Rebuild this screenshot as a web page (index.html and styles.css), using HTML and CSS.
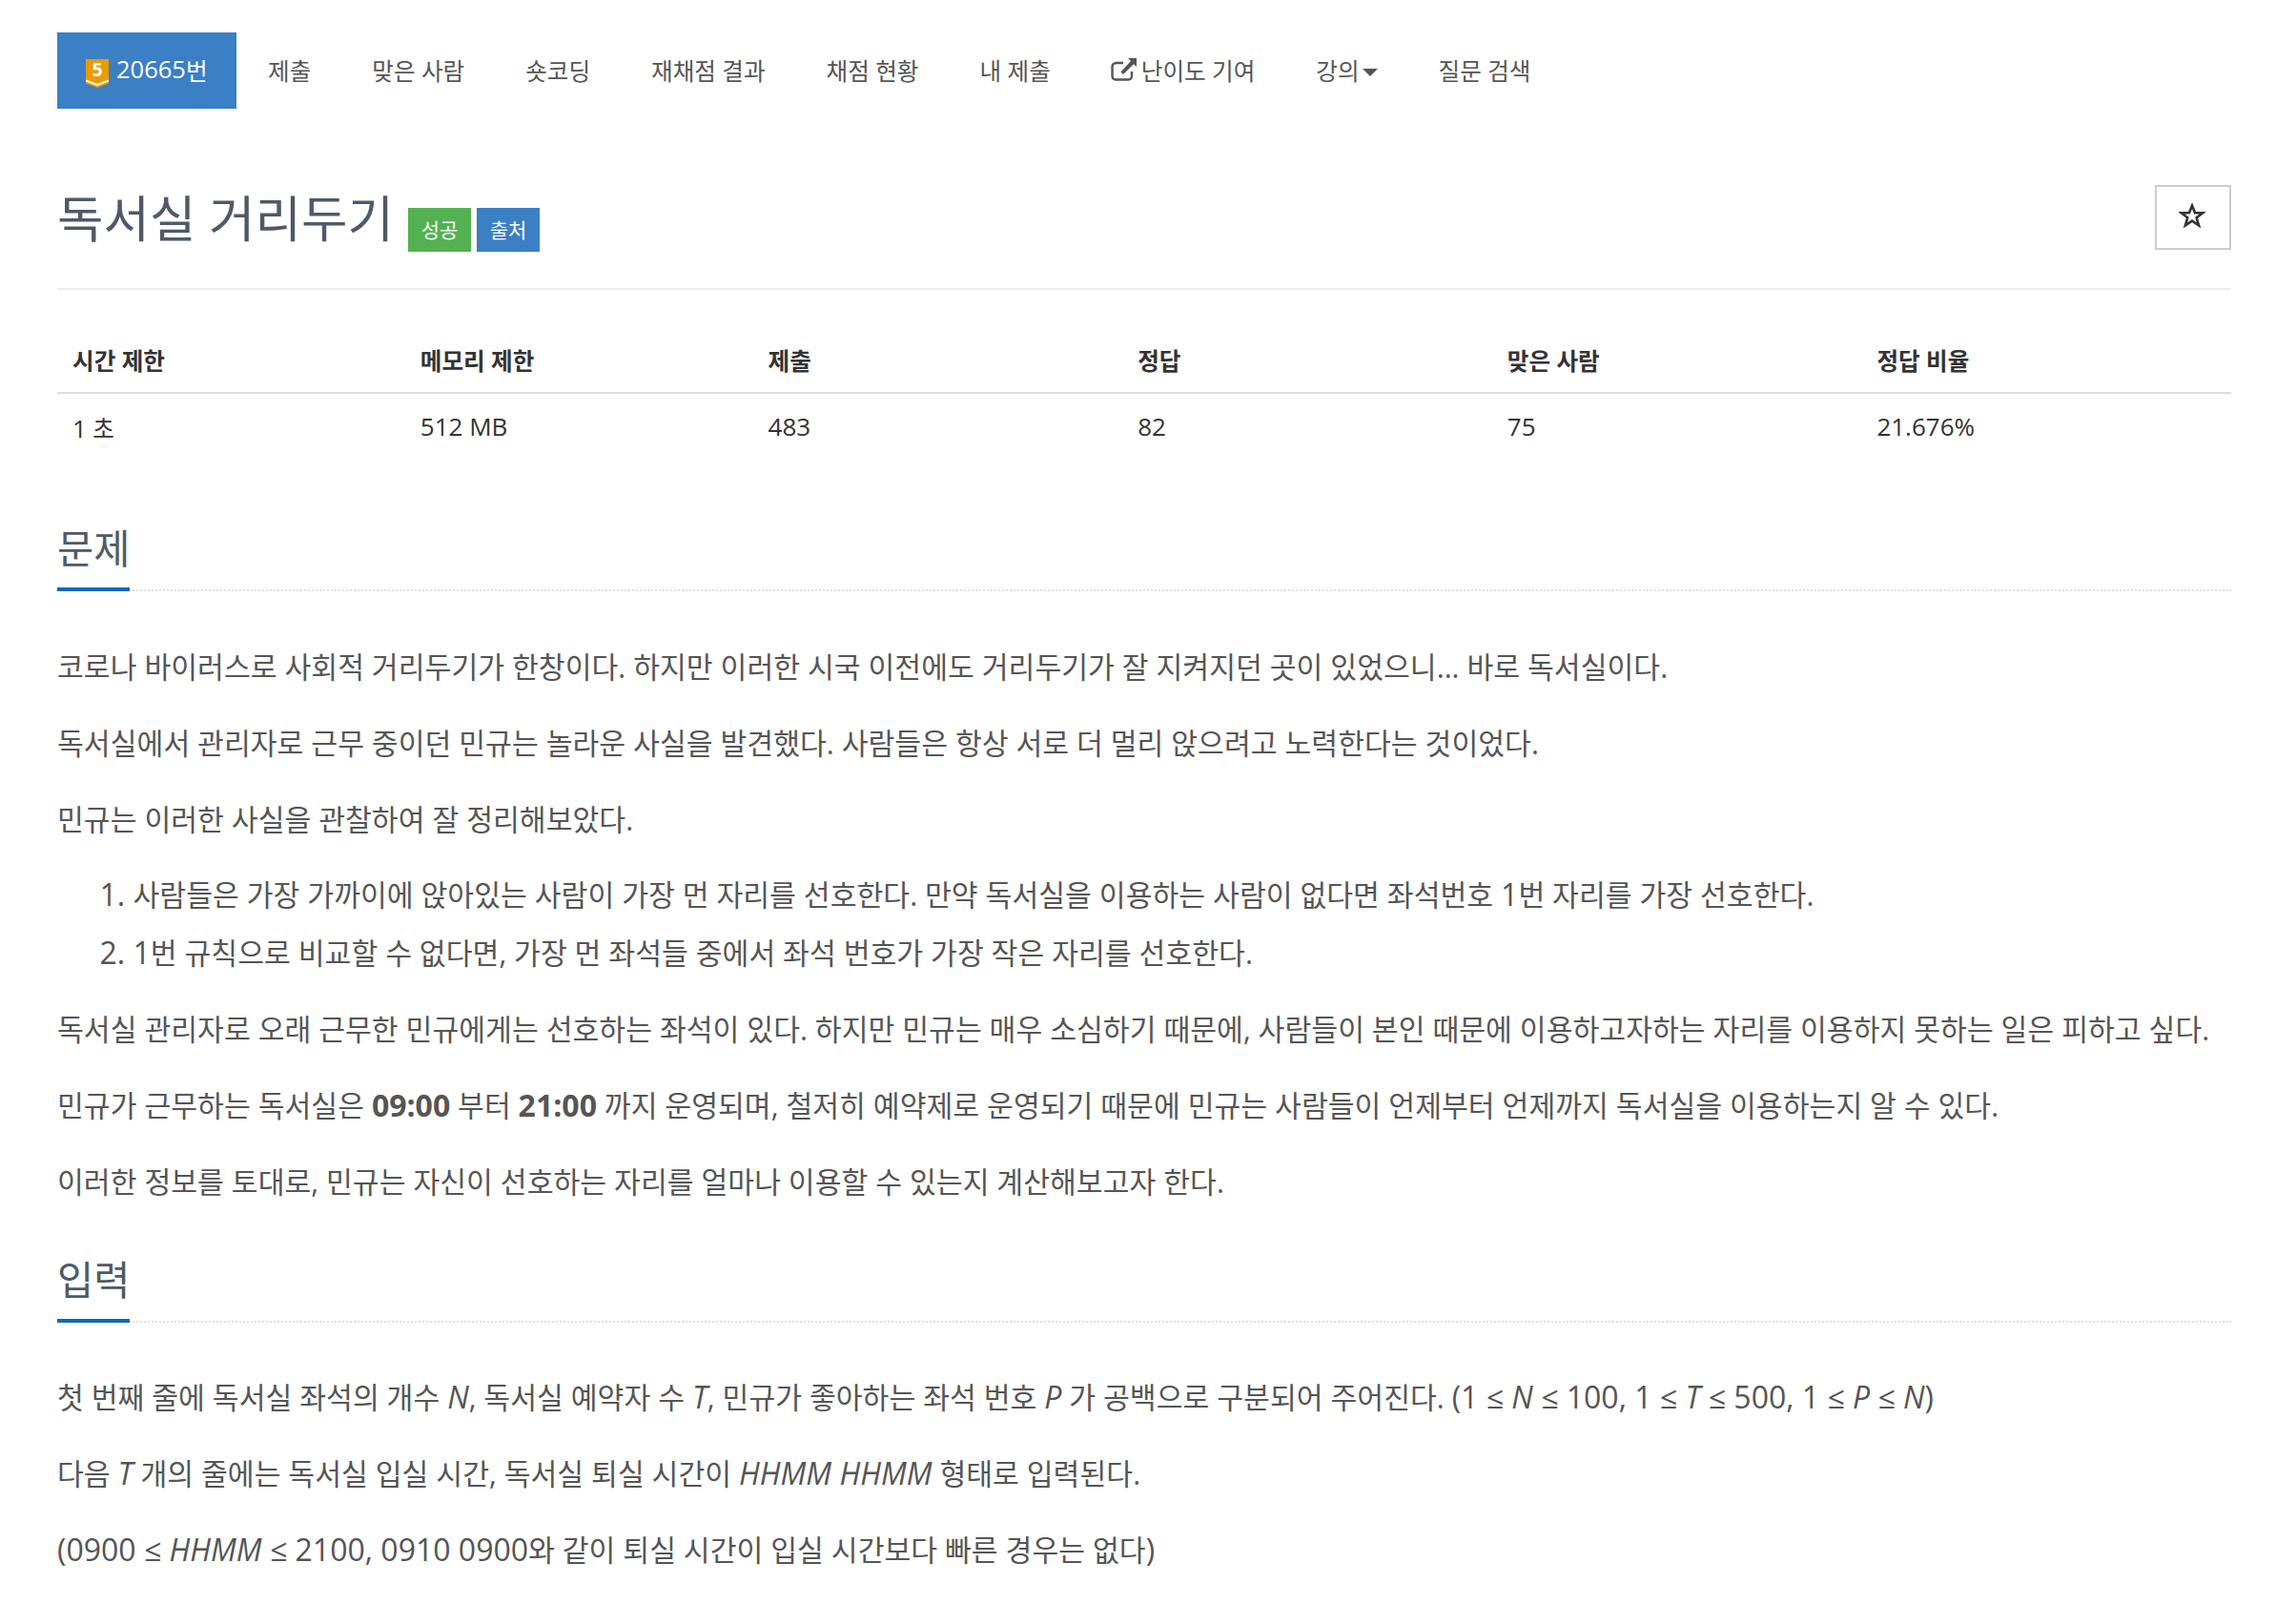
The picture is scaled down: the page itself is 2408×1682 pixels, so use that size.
FILE: index.html
```html
<!DOCTYPE html>
<html lang="ko">
<head>
<meta charset="utf-8">
<title>독서실 거리두기</title>
<link rel="stylesheet" href="styles.css">
</head>
<body>
<div class="page">
  <nav class="tabs">
    <a class="tab active"><svg class="tier" viewBox="0 0 24 30" width="24" height="30"><path d="M0 0H24V25.5L12 30L0 25.5Z" fill="#ec9a00"/><path d="M0 22.5L12 27L24 22.5" fill="none" stroke="#fff" stroke-width="2"/><text x="12" y="18" class="tier-num">5</text></svg><span class="en">20665</span>번</a>
    <a class="tab">제출</a>
    <a class="tab">맞은 사람</a>
    <a class="tab">숏코딩</a>
    <a class="tab">재채점 결과</a>
    <a class="tab">채점 현황</a>
    <a class="tab">내 제출</a>
    <a class="tab"><svg class="ext" viewBox="0 0 28 24" width="28" height="24"><path d="M13 5H5.5A4 4 0 0 0 1.5 9V19A3.5 3.5 0 0 0 5 22.5H18.5A3.5 3.5 0 0 0 22 19V14" fill="none" stroke="#555" stroke-width="2.4"/><path d="M18 0H27V9L24 6.2L13 17L10.4 14.5L21 3Z" fill="#555"/></svg>난이도 기여</a>
    <a class="tab">강의<span class="caret"></span></a>
    <a class="tab">질문 검색</a>
  </nav>

  <header class="title-row">
    <h1 class="title">독서실 거리두기<span class="label green">성공</span><span class="label blue">출처</span></h1>
    <button class="star-btn"><svg viewBox="0 0 28 26" width="28" height="26"><path d="M14 2.5L17 10.2L25.4 10.2L18.7 15.3L21.1 23.4L14 18.6L6.9 23.4L9.3 15.3L2.6 10.2L11 10.2Z" fill="none" stroke="#333" stroke-width="2.6"/></svg></button>
  </header>

  <table class="info">
    <thead>
      <tr><th class="c1">시간 제한</th><th class="c1">메모리 제한</th><th class="c2">제출</th><th class="c2">정답</th><th class="c2">맞은 사람</th><th class="c2">정답 비율</th></tr>
    </thead>
    <tbody>
      <tr><td><span class="en">1</span> 초</td><td><span class="en">512 MB</span></td><td><span class="en">483</span></td><td><span class="en">82</span></td><td><span class="en">75</span></td><td><span class="en">21.676%</span></td></tr>
    </tbody>
  </table>

  <section class="sec">
    <h2 class="head"><span>문제</span></h2>
    <div class="body">
      <p>코로나 바이러스로 사회적 거리두기가 한창이다. 하지만 이러한 시국 이전에도 거리두기가 잘 지켜지던 곳이 있었으니... 바로 독서실이다.</p>
      <p>독서실에서 관리자로 근무 중이던 민규는 놀라운 사실을 발견했다. 사람들은 항상 서로 더 멀리 앉으려고 노력한다는 것이었다.</p>
      <p>민규는 이러한 사실을 관찰하여 잘 정리해보았다.</p>
      <ol>
        <li>사람들은 가장 가까이에 앉아있는 사람이 가장 먼 자리를 선호한다. 만약 독서실을 이용하는 사람이 없다면 좌석번호 <span class="en">1</span>번 자리를 가장 선호한다.</li>
        <li><span class="en">1</span>번 규칙으로 비교할 수 없다면, 가장 먼 좌석들 중에서 좌석 번호가 가장 작은 자리를 선호한다.</li>
      </ol>
      <p>독서실 관리자로 오래 근무한 민규에게는 선호하는 좌석이 있다. 하지만 민규는 매우 소심하기 때문에, 사람들이 본인 때문에 이용하고자하는 자리를 이용하지 못하는 일은 피하고 싶다.</p>
      <p>민규가 근무하는 독서실은 <b class="en">09:00</b> 부터 <b class="en">21:00</b> 까지 운영되며, 철저히 예약제로 운영되기 때문에 민규는 사람들이 언제부터 언제까지 독서실을 이용하는지 알 수 있다.</p>
      <p>이러한 정보를 토대로, 민규는 자신이 선호하는 자리를 얼마나 이용할 수 있는지 계산해보고자 한다.</p>
    </div>
  </section>

  <section class="sec">
    <h2 class="head"><span>입력</span></h2>
    <div class="body">
      <p>첫 번째 줄에 독서실 좌석의 개수 <i class="en">N</i>, 독서실 예약자 수 <i class="en">T</i>, 민규가 좋아하는 좌석 번호 <i class="en">P</i> 가 공백으로 구분되어 주어진다. <span class="en">(1 ≤ <i>N</i> ≤ 100, 1 ≤ <i>T</i> ≤ 500, 1 ≤ <i>P</i> ≤ <i>N</i>)</span></p>
      <p>다음 <i class="en">T</i> 개의 줄에는 독서실 입실 시간, 독서실 퇴실 시간이 <i class="en">HHMM HHMM</i> 형태로 입력된다.</p>
      <p><span class="en">(0900 ≤ <i>HHMM</i> ≤ 2100, 0910 0900</span>와 같이 퇴실 시간이 입실 시간보다 빠른 경우는 없다<span class="en">)</span></p>
    </div>
  </section>
</div>
</body>
</html>
```
FILE: styles.css
```css
* { box-sizing: border-box; }
html, body { margin: 0; background: #fff; }
body {
  font-family: "Open Sans", "Noto Sans CJK KR", sans-serif;
  color: #555;
  font-size: 30.27px;
  height: 1682px;
  overflow: hidden;
}
.page { padding: 34px 68px 0 60px; }

.tabs { display: flex; height: 80px; align-items: stretch; }
.tab {
  display: flex;
  align-items: center;
  padding: 0 32px 3px;
  font-size: 24.6px;
  color: #555;
  white-space: nowrap;
}
.tab.active { background: #3b7fc4; color: #fff; padding: 0 20px 3px 30px; width: 188px; margin-right: 1px; }
.tab.active .en { font-size: 25.5px; }
.tier { margin-right: 8px; margin-top: 9px; flex: none; }
.tier-num { font: 700 19.6px "Open Sans", sans-serif; fill: #fff; text-anchor: middle; }
.ext { margin-left: -1px; margin-right: 4px; }
.caret {
  width: 0; height: 0; margin-left: 3px; margin-top: 6px;
  border-left: 8px solid transparent;
  border-right: 8px solid transparent;
  border-top: 8px solid #555;
}

.title-row {
  display: flex;
  justify-content: space-between;
  align-items: flex-start;
  margin-top: 80px;
  height: 110px;
  border-bottom: 2px solid #eee;
}
.title {
  margin: 0;
  font-size: 52.7px;
  font-weight: 400;
  line-height: 70px;
  color: #4f5a66;
  white-space: nowrap;
}
.label {
  display: inline-block;
  font-size: 21px;
  line-height: 46px;
  height: 46px;
  width: 66px;
  text-align: center;
  color: #fff;
  vertical-align: 0;
  margin-left: 6px;
}
.green { background: #54b151; margin-left: 15px; }
.blue { background: #3b7fc4; }
.star-btn {
  width: 80px; height: 68px;
  display: flex; align-items: center; justify-content: center;
  background: #fff; border: 2px solid #ccc; padding: 0 3px 5px 0;
}

.info { width: 100%; border-collapse: collapse; table-layout: fixed; margin: 38px 0 63px; }
.c1 { width: 16%; }
.c2 { width: 17%; }
.info th {
  text-align: left;
  font-size: 24.6px;
  font-weight: 700;
  color: #333;
  padding: 16px 16px 16px;
  height: 70px;
  border-bottom: 2px solid #ddd;
}
.info td { font-size: 24.6px; color: #333; padding: 0 16px; height: 70px; }
.info .en { font-size: 26px; }

.head {
  margin: 46px 0 0;
  font-size: 41.5px;
  font-weight: 400;
  color: #4f5a66;
  border-bottom: 2px dotted #e0e0e0;
  height: 75px;
  line-height: 60px;
}
.head span { display: inline-block; height: 75px; border-bottom: 4px solid #0a6ab8; }
.body { padding-top: 53.5px; }
.body p { margin: 0 0 28px; line-height: 52px; }
.body ol { margin: -6px 0 24px; padding-left: 79.5px; }
.body li { line-height: 60px; }
.body li::marker { font-size: 32px; }
.en { font-size: 32px; line-height: 1; }
```
